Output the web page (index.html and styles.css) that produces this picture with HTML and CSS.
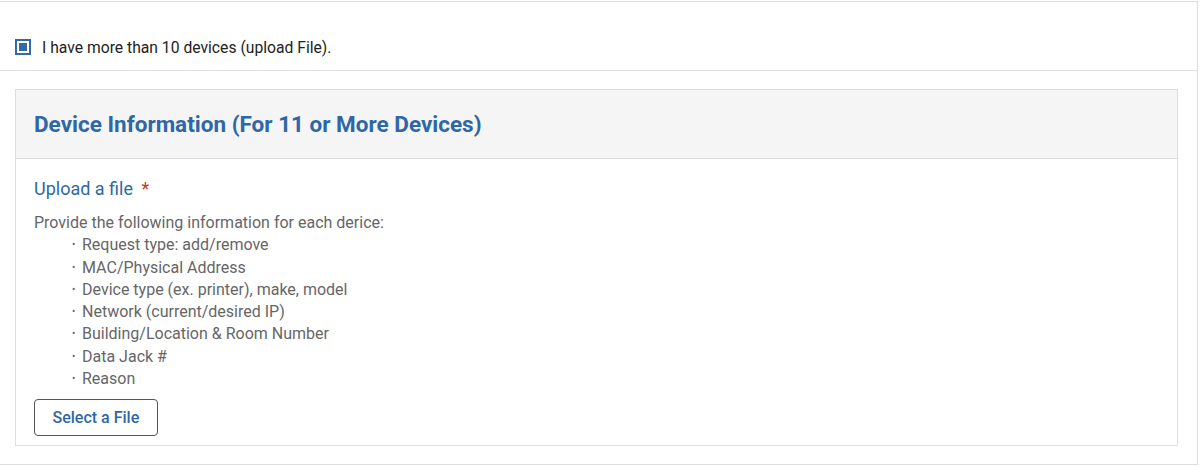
FILE: index.html
```html
<!DOCTYPE html>
<html lang="en">
<head>
<meta charset="utf-8">
<title>Device Information</title>
<link rel="stylesheet" href="styles.css">
</head>
<body>
<div class="wrap">
  <div class="check-row">
    <span class="checkbox"><span class="checkbox-fill"></span></span>
    <span class="check-label">I have more than 10 devices (upload File).</span>
  </div>
  <div class="panel-area">
    <section class="panel">
      <header class="panel-head">
        <h2 class="panel-title">Device Information (For 11 or More Devices)</h2>
      </header>
      <div class="panel-body">
        <div class="field-label">Upload a file <span class="req">*</span></div>
        <p class="desc">Provide the following information for each derice:</p>
        <ul class="items">
          <li>Request type: add/remove</li>
          <li>MAC/Physical Address</li>
          <li>Device type (ex. printer), make, model</li>
          <li>Network (current/desired IP)</li>
          <li>Building/Location &amp; Room Number</li>
          <li>Data Jack #</li>
          <li>Reason</li>
        </ul>
        <button class="file-btn" type="button">Select a File</button>
      </div>
    </section>
  </div>
</div>
</body>
</html>
```

FILE: styles.css
```css
html, body {
  margin: 0;
  padding: 0;
  background: #fff;
  font-family: Roboto, "Liberation Sans", Arial, sans-serif;
}

.wrap {
  margin-top: 1px;
  width: 1197px;
  border-top: 1px solid #dddddd;
  border-right: 1px solid #dddddd;
  border-bottom: 1px solid #dddddd;
}

.check-row {
  height: 69px;
  display: flex;
  align-items: center;
  padding: 22px 0 0 15px;
  box-sizing: border-box;
  border-bottom: 1px solid #dddddd;
}

.checkbox {
  width: 16px;
  height: 16px;
  box-sizing: border-box;
  border: 2px solid #356aa5;
  padding: 2px;
  display: flex;
}

.checkbox-fill {
  flex: 1;
  background: #356aa5;
}

.check-label {
  margin-left: 11px;
  font-size: 15.7px;
  color: #222;
}

.panel-area {
  padding: 18px 19px 18px 15px;
}

.panel {
  border: 1px solid #dddddd;
}

.panel-head {
  background: #f5f5f5;
  border-bottom: 1px solid #dddddd;
  height: 69px;
  box-sizing: border-box;
  display: flex;
  align-items: center;
  padding: 0 18px 1px 18px;
}

.panel-title {
  margin: 0;
  font-size: 22.5px;
  font-weight: 700;
  color: #2f67a6;
}

.panel-body {
  padding: 19px 18px 9px 18px;
}

.field-label {
  font-size: 18px;
  color: #2f67a6;
  line-height: 22px;
}

.req {
  color: #c0392b;
  margin-left: 4px;
}

.desc {
  margin: 12px 0 0 0;
  font-size: 16px;
  line-height: 22.3px;
  color: #666;
}

.items {
  margin: 0;
  padding: 0 0 0 38px;
  list-style: none;
  font-size: 16px;
  line-height: 22.3px;
  color: #666;
}

.items li::before {
  content: "\2022";
  font-size: 10px;
  display: inline-block;
  width: 10px;
  vertical-align: 2px;
}

.file-btn {
  margin-top: 9px;
  height: 37px;
  padding: 0 17.5px;
  border: 1px solid #555;
  border-radius: 4px;
  background: #fff;
  font-family: Roboto, "Liberation Sans", Arial, sans-serif;
  font-size: 16px;
  font-weight: 500;
  color: #2f67a6;
}
```
